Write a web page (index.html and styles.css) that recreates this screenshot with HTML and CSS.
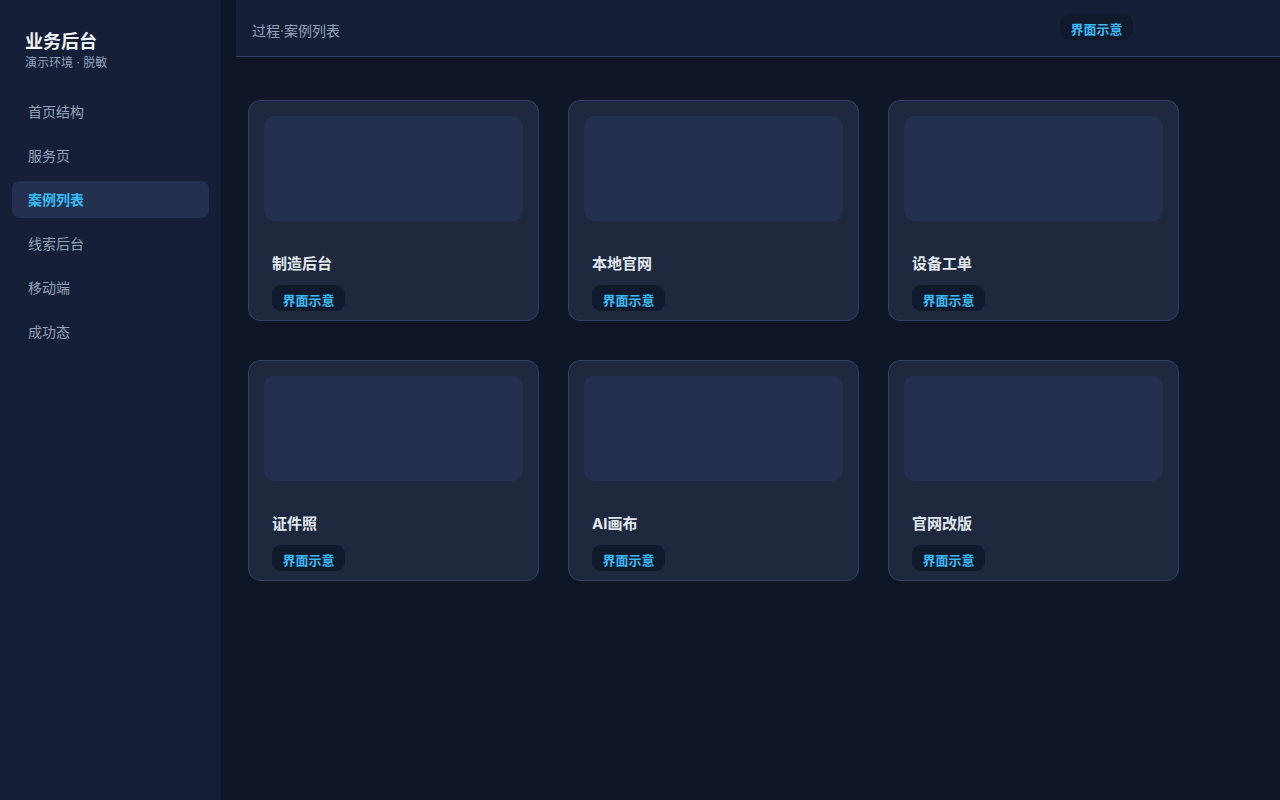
FILE: index.html
```html
<!DOCTYPE html>
<html lang="zh">
<head>
<meta charset="utf-8">
<title>业务后台</title>
<link rel="stylesheet" href="styles.css">
</head>
<body>
<div class="app">
  <aside class="sidebar">
    <div class="brand">
      <div class="brand-title">业务后台</div>
      <div class="brand-sub">演示环境 · 脱敏</div>
    </div>
    <nav class="nav">
      <div class="nav-item">首页结构</div>
      <div class="nav-item">服务页</div>
      <div class="nav-item active">案例列表</div>
      <div class="nav-item">线索后台</div>
      <div class="nav-item">移动端</div>
      <div class="nav-item">成功态</div>
    </nav>
  </aside>
  <main class="main">
    <header class="topbar">
      <div class="crumb">过程·案例列表</div>
      <span class="badge top-badge">界面示意</span>
    </header>
    <section class="grid">
      <div class="card"><div class="thumb"></div><div class="card-title">制造后台</div><span class="badge">界面示意</span></div>
      <div class="card"><div class="thumb"></div><div class="card-title">本地官网</div><span class="badge">界面示意</span></div>
      <div class="card"><div class="thumb"></div><div class="card-title">设备工单</div><span class="badge">界面示意</span></div>
      <div class="card"><div class="thumb"></div><div class="card-title">证件照</div><span class="badge">界面示意</span></div>
      <div class="card"><div class="thumb"></div><div class="card-title">AI画布</div><span class="badge">界面示意</span></div>
      <div class="card"><div class="thumb"></div><div class="card-title">官网改版</div><span class="badge">界面示意</span></div>
    </section>
  </main>
</div>
</body>
</html>
```
FILE: styles.css
```css
* { box-sizing: border-box; }
html, body { margin: 0; padding: 0; }
body {
  background: #0e1628;
  font-family: Inter, "Noto Sans CJK SC", sans-serif;
  color: #e2e8f0;
  width: 1280px;
  height: 800px;
  overflow: hidden;
}
.app { display: flex; height: 800px; }
.sidebar {
  width: 221px;
  flex: none;
  background: #151f38;
  padding: 29px 12px 0;
}
.brand { padding-left: 13px; }
.brand-title { font-size: 18px; font-weight: 700; line-height: 26px; color: #f1f5f9; }
.brand-sub { font-size: 12px; line-height: 16px; color: #94a3b8; }
.nav { margin-top: 21.5px; display: flex; flex-direction: column; gap: 7px; }
.nav-item {
  height: 37px;
  line-height: 37px;
  padding-left: 16px;
  font-size: 14px;
  color: #94a3b8;
  border-radius: 8px;
}
.nav-item.active { background: #243050; color: #38bdf8; font-weight: 700; }
.main { flex: 1; padding-left: 15px; }
.topbar {
  height: 57px;
  background: #151f38;
  border-bottom: 1px solid #334160;
  display: flex;
  align-items: center;
  padding-left: 16px;
}
.crumb { font-size: 14px; color: #94a3b8; flex: 1; padding-top: 4px; }
.top-badge { margin-right: 147px; margin-top: -3px; }
.badge {
  display: inline-block;
  height: 26px;
  line-height: 30px;
  padding: 0 10.5px;
  border-radius: 9px;
  background: #0f1a2c;
  color: #38bdf8;
  font-size: 13px;
  font-weight: 700;
}
.grid {
  display: grid;
  grid-template-columns: repeat(3, 291px);
  column-gap: 29px;
  row-gap: 39px;
  padding: 43px 0 0 12px;
}
.card {
  height: 221px;
  background: #1e293f;
  border: 1px solid #334160;
  border-radius: 12px;
  padding: 15px 15px 9px;
}
.thumb { height: 105px; background: #243050; border-radius: 10px; }
.card-title {
  margin: 31px 0 9px 8px;
  font-size: 15px;
  font-weight: 700;
  line-height: 24px;
  color: #e2e8f0;
}
.card .badge { margin-left: 8px; }
```
